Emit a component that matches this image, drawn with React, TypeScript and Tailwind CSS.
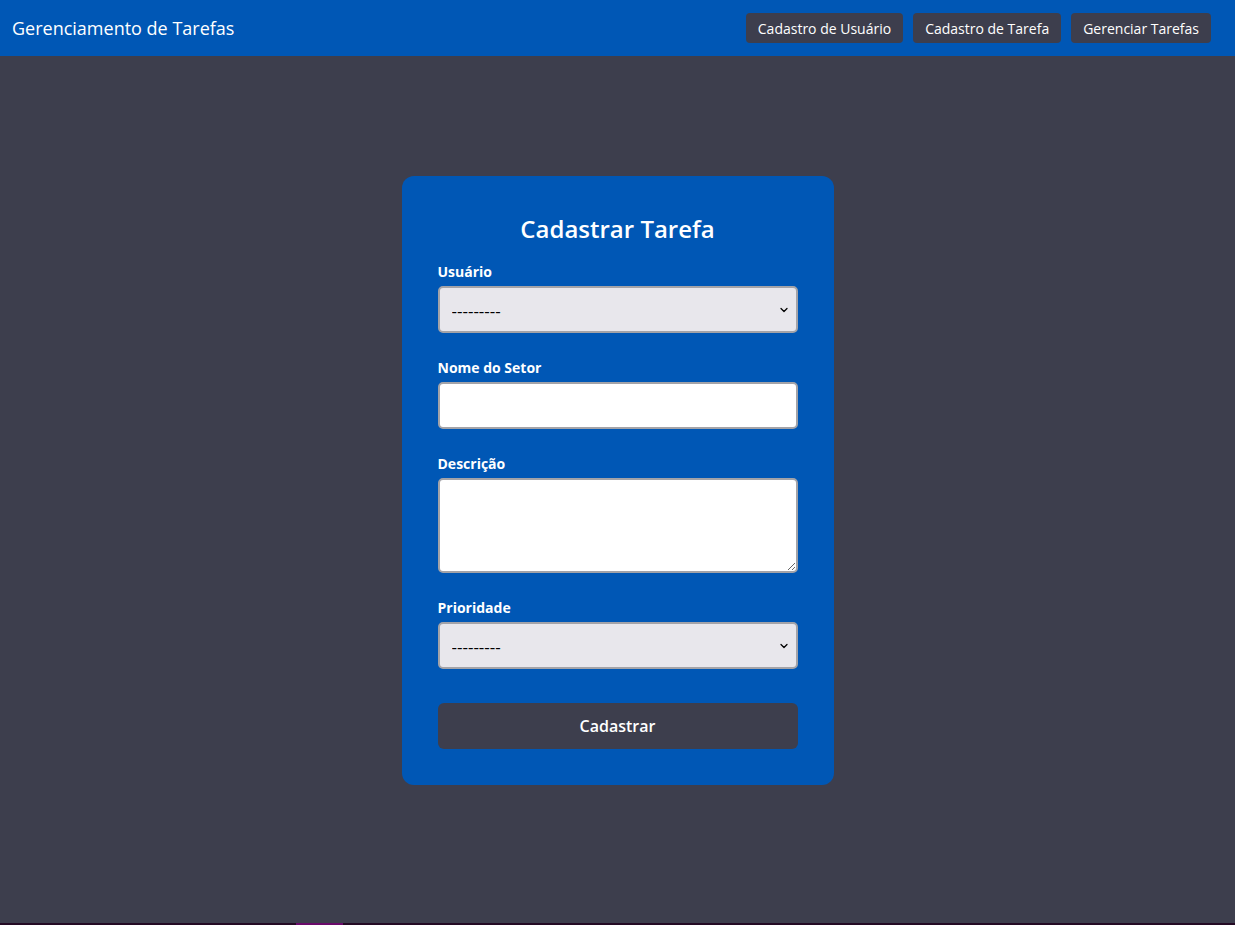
import { ChevronDown } from "lucide-react"

const navItems = ["Cadastro de Usuário", "Cadastro de Tarefa", "Gerenciar Tarefas"]

function SelectField({ label }: { label: string }) {
  return (
    <div className="flex flex-col">
      <label className="mb-[5px] text-sm font-bold leading-[19px] text-white">{label}</label>
      <div className="relative">
        <select className="h-[47px] w-full appearance-none rounded-[5px] border-2 border-[#a3a3a8] bg-[#e8e7ec] pl-3 pr-8 pt-[3px] text-[17px] text-black outline-none">
          <option>---------</option>
        </select>
        <ChevronDown
          className="pointer-events-none absolute right-[8px] top-1/2 h-[12px] w-[12px] -translate-y-1/2 text-black"
          strokeWidth={2.5}
        />
      </div>
    </div>
  )
}

export default function App() {
  return (
    <div className="flex min-h-screen flex-col bg-[#3d3e4d] font-['Open_Sans',sans-serif]">
      {/* Navbar */}
      <header className="flex h-[56px] items-center justify-between bg-[#0057b5] pl-3 pr-6">
        <h1 className="text-lg text-white">Gerenciamento de Tarefas</h1>
        <nav className="flex gap-[10px]">
          {navItems.map((item) => (
            <button
              key={item}
              className="h-[30px] rounded-[4px] bg-[#3d3e4d] px-3 pt-[2px] text-sm text-white"
            >
              {item}
            </button>
          ))}
        </nav>
      </header>

      <main className="flex flex-1 justify-center pt-[120px]">
        <div className="h-fit w-[432px] rounded-xl bg-[#0057b5] px-9 pb-9 pt-9">
          <h2 className="mb-[17px] text-center text-2xl font-semibold leading-[33px] text-white">
            Cadastrar Tarefa
          </h2>

          <div className="flex flex-col gap-[25px]">
            <SelectField label="Usuário" />

            <div className="flex flex-col">
              <label className="mb-[5px] text-sm font-bold leading-[19px] text-white">Nome do Setor</label>
              <input className="h-[47px] w-full rounded-[5px] border-2 border-[#a3a3a8] bg-white px-3 text-sm outline-none" />
            </div>

            <div className="flex flex-col">
              <label className="mb-[5px] text-sm font-bold leading-[19px] text-white">Descrição</label>
              <textarea className="block h-[95px] w-full rounded-[5px] border-2 border-[#a3a3a8] bg-white px-3 py-2 text-sm outline-none" />
            </div>

            <SelectField label="Prioridade" />
          </div>

          <button className="mt-[34px] h-[46px] w-full rounded-[6px] bg-[#3d3e4d] text-base font-semibold text-white">
            Cadastrar
          </button>
        </div>
      </main>

      <div className="flex h-[2px]">
        <div className="w-[296px] bg-[#240a24]" />
        <div className="w-[47px] bg-[#6a0a6a]" />
        <div className="flex-1 bg-[#240a24]" />
      </div>
    </div>
  )
}
